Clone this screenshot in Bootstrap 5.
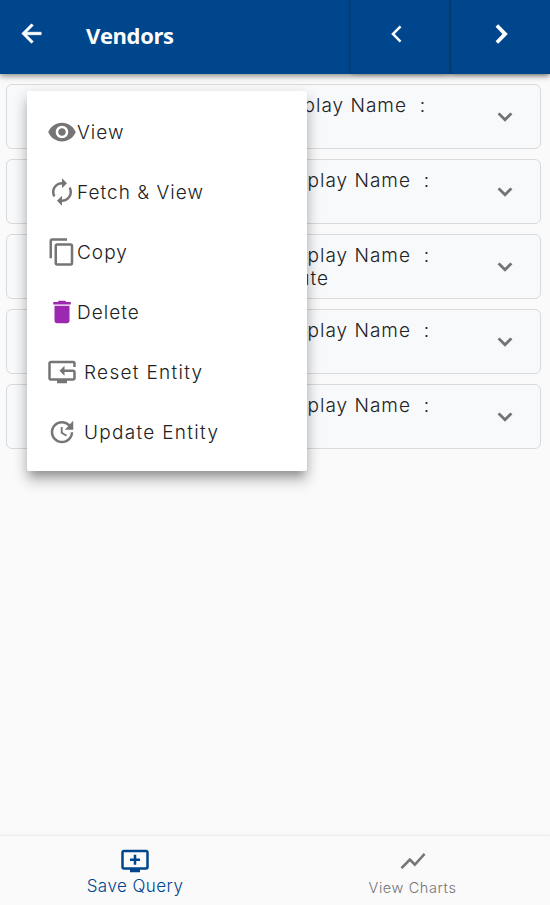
<!DOCTYPE html>
<html lang="en">
<head>
<meta charset="utf-8">
<meta name="viewport" content="width=device-width, initial-scale=1">
<title>Vendors</title>
<link href="https://cdn.jsdelivr.net/npm/bootstrap@5.3.0/dist/css/bootstrap.min.css" rel="stylesheet">
<style>
body{background:#fafafa;color:#212224;font-family:Inter,"Liberation Sans",sans-serif;font-size:19px;font-weight:300;height:905px;overflow:hidden}
svg{fill:currentColor;display:block;flex:none}
.topbar{height:74px;background:#00468c;box-shadow:0 2px 6px rgba(0,0,0,.45);z-index:2}
.back-btn{padding-left:17px;width:86px;padding-bottom:7px}
.title{font:700 22px/30px "Open Sans","Noto Sans",sans-serif;letter-spacing:-.38px;padding-bottom:5px}
.pager{width:99px;margin-left:1px;background:#00468c;padding-bottom:6px;border-radius:0 0 4px 4px;box-shadow:0 0 4px rgba(0,0,0,.3)}
.pager-prev{padding-right:7px}
.pager-next{padding-left:2px}
.records{padding:10px 9px 0 6px;gap:10px}
.record{height:65px;background:#f8f9fb;border:1px solid #d9dadc;border-radius:6px;padding:1px 21px 0 0}
.record-text{line-height:23px;padding-top:8px;letter-spacing:1px;white-space:pre}
.record-name{width:423px}
.record:first-child .record-name{width:419px}
.record-more{width:322px}
.arrow{color:#727375}
.context-menu{left:27px;top:91px;width:280px;height:380px;padding:11px 20px;border-radius:2px;box-shadow:0 8px 8px -4px rgba(0,0,0,.24),0 10px 14px 1px rgba(0,0,0,.18),0 3px 14px 2px rgba(0,0,0,.08);z-index:3}
.entry{height:60px;color:#757575}
.entry span{color:#212121;padding-top:2px;letter-spacing:1.02px}
.entry .wide-gap{margin-left:7px;letter-spacing:1.3px}
.purple{color:#9c27b0}
.bottombar{height:70px;border-top:1px solid #eeeeee;box-shadow:0 -1px 2px rgba(0,0,0,.03)}
.tab-save{color:#00468c;width:270px;padding-top:10px;font-size:17px;line-height:20px;letter-spacing:.45px}
.tab-chart{color:#757575;width:280px;padding:10px 0 0 5px;font-size:14.5px;line-height:24px;letter-spacing:.6px}
</style>
<script src="https://cdn.jsdelivr.net/npm/bootstrap@5.3.0/dist/js/bootstrap.bundle.min.js"></script>
</head>
<body class="d-flex flex-column position-relative">
<header class="topbar d-flex text-white position-relative flex-shrink-0">
  <div class="back-btn d-flex align-items-center"><svg width="29" height="29" viewBox="0 0 24 24"><path d="M20 11H7.830l5.590-5.590L12 4l-8 8 8 8 1.410-1.410L7.830 13H20z" stroke="currentColor" stroke-width=".6"/></svg></div>
  <div class="title flex-grow-1 align-self-center">Vendors</div>
  <div class="pager pager-prev d-flex align-items-center justify-content-center"><svg width="28" height="28" viewBox="0 0 24 24"><path d="M15.800 6.300 14.300 4.800 7 12l7.300 7.200 1.500-1.500L10.100 12z"/></svg></div>
  <div class="pager pager-next d-flex align-items-center justify-content-center"><svg width="28" height="28" viewBox="0 0 24 24"><path d="M6.500 5.800 8.700 3.600l8.300 8.400-8.300 8.400-2.200-2.200L12.400 12z"/></svg></div>
</header>
<main class="records d-flex flex-column flex-grow-1">
  <div class="record d-flex justify-content-between align-items-center"><div class="record-text align-self-start"><div class="record-name text-end">Display Name  :</div></div><svg class="arrow" width="28" height="28" viewBox="0 0 24 24"><path d="M7.410 8.100 12 12.700l4.590-4.600L18.400 9.700 12 16 5.600 9.700z"/></svg></div>
  <div class="record d-flex justify-content-between align-items-center"><div class="record-text align-self-start"><div class="record-name text-end">Display Name  :</div></div><svg class="arrow" width="28" height="28" viewBox="0 0 24 24"><path d="M7.410 8.100 12 12.700l4.590-4.600L18.400 9.700 12 16 5.600 9.700z"/></svg></div>
  <div class="record d-flex justify-content-between align-items-center"><div class="record-text align-self-start"><div class="record-name text-end">Display Name  :</div><div class="record-more text-end">ute</div></div><svg class="arrow" width="28" height="28" viewBox="0 0 24 24"><path d="M7.410 8.100 12 12.700l4.590-4.600L18.400 9.700 12 16 5.600 9.700z"/></svg></div>
  <div class="record d-flex justify-content-between align-items-center"><div class="record-text align-self-start"><div class="record-name text-end">Display Name  :</div></div><svg class="arrow" width="28" height="28" viewBox="0 0 24 24"><path d="M7.410 8.100 12 12.700l4.590-4.600L18.400 9.700 12 16 5.600 9.700z"/></svg></div>
  <div class="record d-flex justify-content-between align-items-center"><div class="record-text align-self-start"><div class="record-name text-end">Display Name  :</div></div><svg class="arrow" width="28" height="28" viewBox="0 0 24 24"><path d="M7.410 8.100 12 12.700l4.590-4.600L18.400 9.700 12 16 5.600 9.700z"/></svg></div>
</main>
<div class="context-menu bg-white position-absolute">
  <div class="entry d-flex align-items-center"><svg width="30" height="30" viewBox="0 0 24 24"><path d="M12 4.500C7 4.500 2.730 7.610 1 12c1.730 4.390 6 7.500 11 7.500s9.270-3.110 11-7.500c-1.730-4.390-6-7.500-11-7.500zM12 17c-2.760 0-5-2.240-5-5s2.240-5 5-5 5 2.240 5 5-2.240 5-5 5zm0-8c-1.660 0-3 1.340-3 3s1.340 3 3 3 3-1.340 3-3-1.340-3-3-3z"/></svg><span>View</span></div>
  <div class="entry d-flex align-items-center"><svg width="30" height="30" viewBox="0 0 24 24"><path d="M12 6v3l4-4-4-4v3c-4.420 0-8 3.580-8 8 0 1.570.46 3.030 1.240 4.260L6.700 14.800c-.45-.83-.7-1.790-.7-2.800 0-3.310 2.690-6 6-6zm6.760 1.740L17.300 9.200c.44.840.7 1.790.7 2.800 0 3.310-2.690 6-6 6v-3l-4 4 4 4v-3c4.420 0 8-3.580 8-8 0-1.570-.46-3.030-1.240-4.260z"/></svg><span>Fetch &amp; View</span></div>
  <div class="entry d-flex align-items-center"><svg width="30" height="30" viewBox="0 0 24 24"><path d="M16 1H4c-1.100 0-2 .9-2 2v14h2V3h12V1zm3 4H8c-1.100 0-2 .9-2 2v14c0 1.100.9 2 2 2h11c1.100 0 2-.9 2-2V7c0-1.100-.9-2-2-2zm0 16H8V7h11v14z"/></svg><span>Copy</span></div>
  <div class="entry d-flex align-items-center"><svg class="purple" width="30" height="30" viewBox="0 0 24 24"><path d="M6 19c0 1.100.9 2 2 2h8c1.100 0 2-.9 2-2V7H6v12zM19 4h-3.500l-1-1h-5l-1 1H5v2h14V4z"/></svg><span>Delete</span></div>
  <div class="entry d-flex align-items-center"><svg width="30" height="30" viewBox="0 0 24 24"><path d="M23 8V5c0-1.100-.9-2-2-2H3c-1.100 0-2 .9-2 2v12c0 1.100.9 2 2 2h5v2h8v-2h5c1.100 0 2-.9 2-2v-5c0-1.100-.9-2-2-2h-7V7l-4 4 4 4v-3h7v5H3V5h18v3h2z"/></svg><span class="wide-gap">Reset Entity</span></div>
  <div class="entry d-flex align-items-center"><svg width="30" height="30" viewBox="0 0 24 24"><path d="M21 10.120h-6.780l2.740-2.820c-2.730-2.700-7.150-2.800-9.880-.1-2.730 2.710-2.730 7.080 0 9.790s7.150 2.710 9.880 0C18.320 15.650 19 14.080 19 12.100h2c0 1.980-.88 4.550-2.640 6.290-3.510 3.480-9.210 3.480-12.720 0-3.500-3.470-3.530-9.110-.02-12.580s9.140-3.470 12.650 0L21 3v7.120zM12.500 8v4.250l3.500 2.080-.72 1.210L11 13V8h1.500z"/></svg><span class="wide-gap">Update Entity</span></div>
</div>
<footer class="bottombar d-flex flex-shrink-0">
  <div class="tab-save d-flex flex-column align-items-center"><svg width="30" height="30" viewBox="0 0 24 24"><path d="M21 3H3c-1.110 0-2 .89-2 2v12c0 1.100.89 2 2 2h5v2h8v-2h5c1.100 0 2-.9 2-2V5c0-1.110-.9-2-2-2zm0 14H3V5h18v12zm-5-7v2h-3v3h-2v-3H8v-2h3V7h2v3h3z"/></svg><span>Save Query</span></div>
  <div class="tab-chart d-flex flex-column align-items-center"><svg width="30" height="30" viewBox="0 0 24 24"><path d="M3.500 18.490l6-6.010 4 4L22 6.920l-1.410-1.410-7.090 7.970-4-4L2 16.990z"/></svg><span>View Charts</span></div>
</footer>
</body>
</html>
